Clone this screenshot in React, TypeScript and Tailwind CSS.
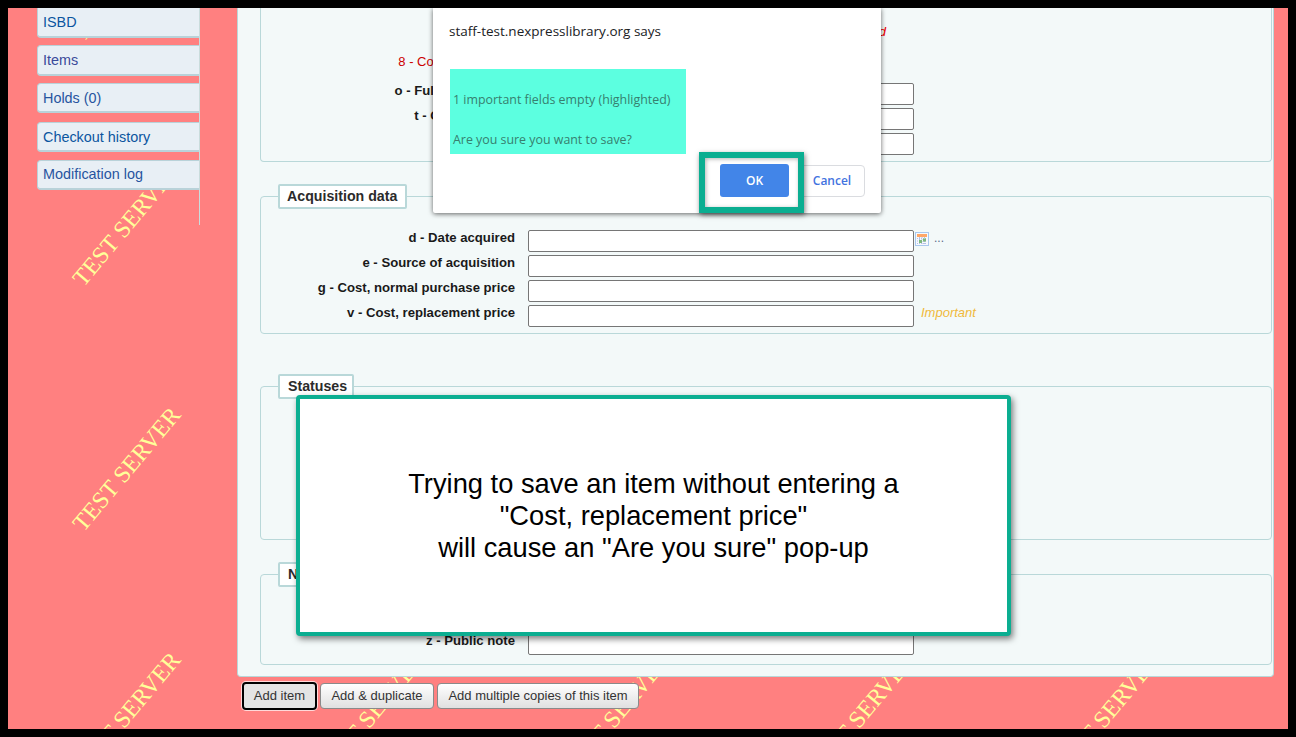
import React from "react";

const tabs = [
  { t: "ISBD", cls: "h-[30px] pt-[2px] border-t-0 rounded-tl-none text-[#0b559f]", mt: "mt-0" },
  { t: "Items", cls: "h-[31px] pt-[2px] text-[#3a4a9a]", mt: "mt-[7px]" },
  { t: "Holds (0)", cls: "h-[30px] pt-[3px] text-[#27549f]", mt: "mt-[7px]" },
  { t: "Checkout history", cls: "h-[30px] pt-[3px] text-[#0b559f]", mt: "mt-[9px]" },
  { t: "Modification log", cls: "h-[30px] text-[#27549f]", mt: "mt-[8px]" },
];

function Row({ label, children, mt }: { label: string; children?: React.ReactNode; mt?: string }) {
  return (
    <div className={`flex h-[22px] ${mt ?? "mt-[3px]"}`}>
      <div className="w-[254px] text-right text-[13.15px] font-bold leading-[16px] text-[#1a1a1a]">{label}</div>
      <div className="ml-[13px] h-[22px] w-[386px] rounded-[2px] border border-[#767676] bg-white" />
      {children}
    </div>
  );
}

function CalendarIcon() {
  return (
    <svg width="14" height="14" viewBox="0 0 14 14" className="ml-[1px] mt-[2px]">
      <rect x="0.5" y="0.5" width="13" height="13" fill="#f6f9fd" stroke="#a9c8ee" />
      <rect x="2" y="2" width="10" height="3" fill="#ffa768" />
      <path d="M2 6.5h10M2 9h10M2 11.5h10M4.5 5v7M7 5v7M9.5 5v7" stroke="#b4c0e4" strokeWidth="1" strokeDasharray="1 1" />
      <rect x="4" y="8" width="3" height="3" fill="#7db87d" />
      <rect x="8" y="6.5" width="3" height="3" fill="#7db87d" />
    </svg>
  );
}

function Legend({ children, w, pl }: { children: React.ReactNode; w: string; pl: string }) {
  return (
    <legend className={`ml-[17px] flex h-[25px] items-center rounded-[2px] border-2 border-[#b9d8d9] bg-white text-[14.2px] font-bold text-[#2b2b2b] ${w} ${pl}`}>
      {children}
    </legend>
  );
}

export default function App() {
  const tiles = Array.from({ length: 36 }, (_, i) => i);
  return (
    <div className="h-[737px] w-[1296px] overflow-hidden bg-black p-2 font-['Liberation_Sans',Arial,sans-serif]">
      <div className="relative flex h-full w-full overflow-hidden bg-[#ff8080]">
        {/* watermark */}
        <div className="absolute left-[-4px] top-[-152px] grid grid-cols-[repeat(6,245px)] auto-rows-[245px]">
          {tiles.map((i) => (
            <div key={i} className="flex items-center justify-center">
              <span className="rotate-[-50deg] whitespace-nowrap font-['Liberation_Serif',serif] text-[24px] text-[#ffff99]">
                TEST SERVER
              </span>
            </div>
          ))}
        </div>

        {/* sidebar */}
        <div className="relative w-[229px] shrink-0 pl-[29px]">
          <div className="h-[217px] w-[163px] border-r border-[#c9dcdc]">
            {tabs.map((x) => (
              <div
                key={x.t}
                className={`flex items-center rounded-l-[4px] border-b-2 border-l border-t border-[#b9d2d9] bg-[#e8eff5] pl-[5px] text-[14.4px] ${x.cls} ${x.mt}`}
              >
                {x.t}
              </div>
            ))}
          </div>
        </div>

        {/* main */}
        <div className="relative flex w-[1037px] shrink-0 flex-col">
          <div className="h-[669px] rounded-b-[4px] border-x border-b border-[#b9d8d9] bg-[#f3f9f9] pl-[22px] pr-[1px]">
            <div className="h-[154px] rounded-b-[4px] border-x border-b border-[#b9d8d9] pt-[16px]">
              <div className="flex h-[22px] justify-start">
                <div className="ml-[267px] w-[358px] text-right text-[13px] italic leading-[16px] text-[#ee0000]">Required</div>
              </div>
              <div className="mt-[7px] h-[22px] w-[245px] pt-[1px] text-right text-[13px] leading-[16px] text-[#cc0000]">8 - Collection code</div>
              <Row label="o - Full call number" mt="mt-[8px]" />
              <Row label="t - Copy number" />
              <Row label="c - Shelf" />
            </div>

            <fieldset className="mt-[22px] h-[150px] rounded-[4px] border border-[#b9d8d9]">
              <Legend w="w-[129px]" pl="pl-[7px]">Acquisition data</Legend>
              <Row label="d - Date acquired" mt="mt-[21px]">
                <CalendarIcon />
                <span className="ml-[5px] text-[12px] leading-[16px] text-[#5a6a8a]">...</span>
              </Row>
              <Row label="e - Source of acquisition" />
              <Row label="g - Cost, normal purchase price" />
              <Row label="v - Cost, replacement price">
                <span className="ml-[7px] text-[13px] italic leading-[16px] text-[#f0b93c]">Important</span>
              </Row>
            </fieldset>

            <fieldset className="mt-[40px] h-[166px] rounded-[4px] border border-[#b9d8d9]">
              <Legend w="w-[76px]" pl="pl-[8px]">Statuses</Legend>
            </fieldset>

            <fieldset className="mt-[22px] h-[103px] rounded-[4px] border border-[#b9d8d9]">
              <Legend w="w-[76px]" pl="pl-[8px]">Notes</Legend>
              <Row label="z - Public note" mt="mt-[46px]" />
            </fieldset>
          </div>

          <div className="ml-[5px] mt-[5px] flex items-center text-[13px] text-[#333333]">
            <button className="h-[28px] w-[75px] rounded-[4px] border-2 border-black bg-[#e4e4e4] shadow-[0_0_0_1px_rgba(255,255,255,0.7)]">Add item</button>
            <button className="ml-[3px] h-[26px] w-[114px] rounded-[4px] border border-[#8a8a8a] bg-gradient-to-b from-white to-[#e0e0e0]">Add &amp; duplicate</button>
            <button className="ml-[3px] h-[26px] w-[202px] rounded-[4px] border border-[#8a8a8a] bg-gradient-to-b from-white to-[#e0e0e0]">Add multiple copies of this item</button>
          </div>
        </div>

        {/* browser confirm dialog */}
        <div className="absolute left-[425px] top-0 h-[205px] w-[448px] rounded-b-[2px] bg-white pl-[16px] pt-[14px] shadow-[0_1px_5px_rgba(0,0,0,0.6)] font-['Open_Sans',sans-serif]">
          <div className="text-[13.5px] leading-[18px] text-[#202124]">staff-test.nexpresslibrary.org says</div>
          <div className="ml-[1px] mt-[29px] h-[85px] w-[236px] bg-[#5cffe0] pl-[3px] pt-[21px] text-[12.4px] leading-[20px] text-[#37806f]">
            <div>1 important fields empty (highlighted)</div>
            <div className="mt-[20px]">Are you sure you want to save?</div>
          </div>
          <div className="mr-[16px] mt-[10px] flex justify-end gap-[9px] text-[12px] font-semibold">
            <button className="h-[33px] w-[69px] rounded-[3px] bg-[#4285e8] text-white">OK</button>
            <button className="mt-[1px] h-[32px] w-[67px] rounded-[4px] border border-[#dadce0] bg-white pl-[1px] text-[#4273e0]">Cancel</button>
          </div>
          <div className="absolute left-[266px] top-[144px] h-[61px] w-[105px] border-[6px] border-[#0bae91] shadow-[1px_2px_5px_rgba(0,0,0,0.5),inset_1px_1px_4px_rgba(0,0,0,0.3)]" />
        </div>

        {/* callout */}
        <div className="absolute left-[288px] top-[387px] flex h-[241px] w-[715px] items-center justify-center rounded-[4px] border-4 border-[#0bae91] bg-white text-center text-[27.3px] leading-[32px] text-black shadow-[2px_3px_6px_rgba(0,0,0,0.5)]">
          <div>
            Trying to save an item without entering a
            <br />
            "Cost, replacement price"
            <br />
            will cause an "Are you sure" pop-up
          </div>
        </div>
      </div>
    </div>
  );
}
